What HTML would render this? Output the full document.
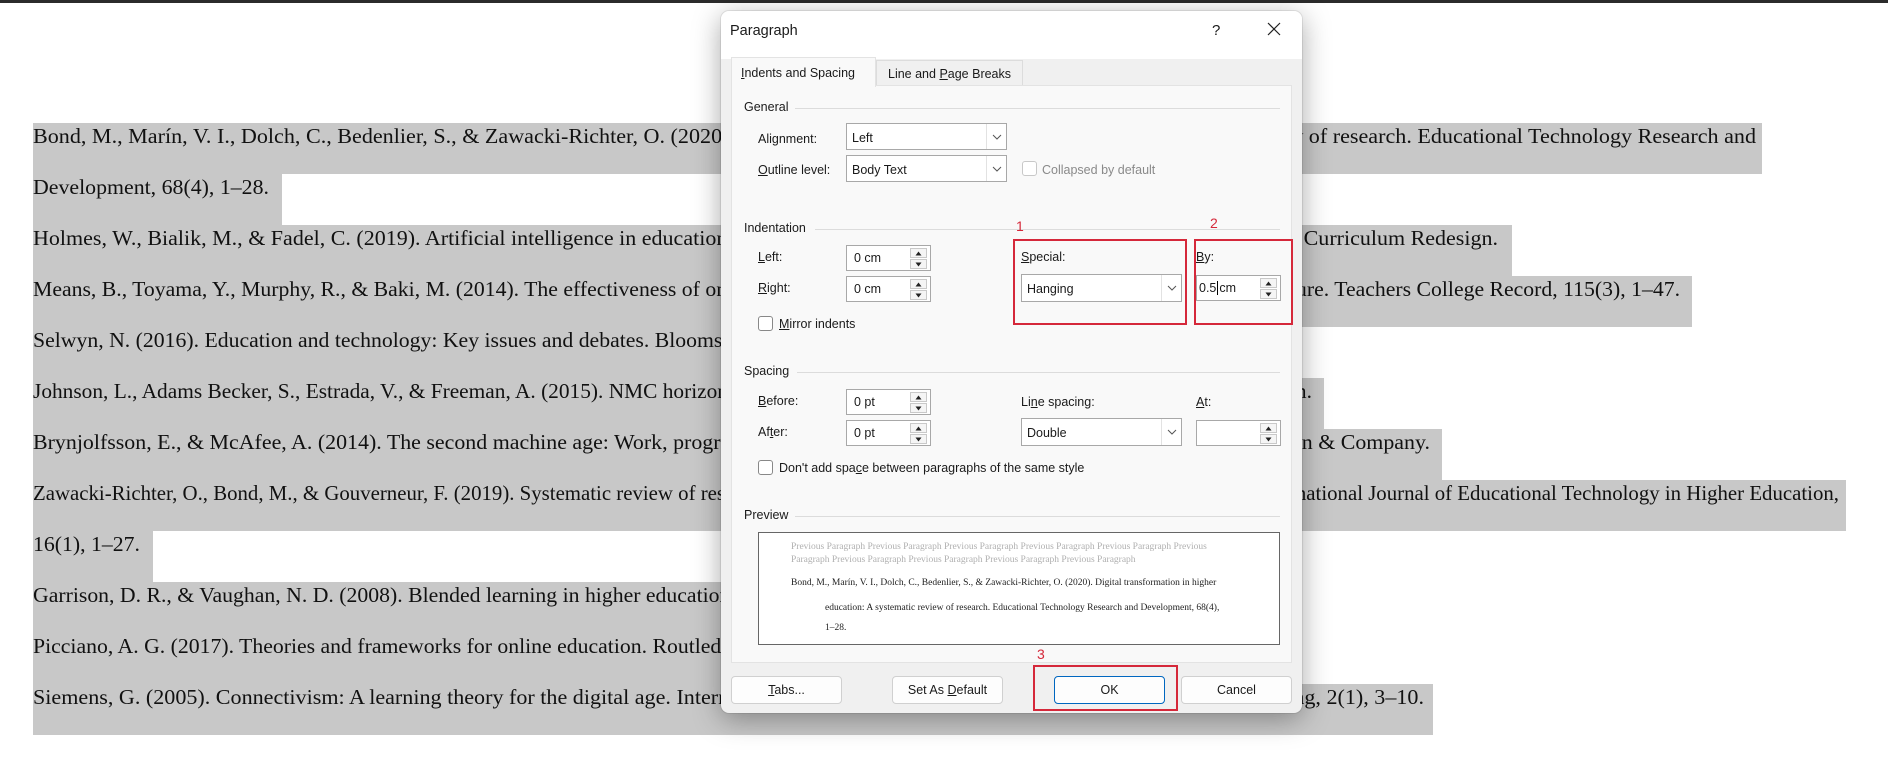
<!DOCTYPE html>
<html><head><meta charset="utf-8">
<style>
*{box-sizing:border-box;margin:0;padding:0}
body{width:1888px;height:760px;background:#fff;position:relative;overflow:hidden;font-family:"Liberation Sans",sans-serif}
.topbar{position:absolute;left:0;top:0;width:1888px;height:3px;background:#2b2b2b}
.row{position:absolute;left:33px;height:51px;background:#c8c8c8;overflow:hidden}
.row span{position:absolute;left:0;top:0;white-space:nowrap;font-family:"Liberation Serif",serif;font-size:21px;line-height:26px;color:#111;transform-origin:0 0}
.row span.n{transform:scaleX(1.035)}
.dlg{position:absolute;left:721px;top:11px;width:581px;height:702px;background:#f0f0f0;border-radius:8px;box-shadow:0 6px 28px rgba(0,0,0,.35),0 0 0 1px rgba(0,0,0,.08);overflow:hidden}
.abs{position:absolute}
.t{font-size:12.5px;color:#1a1a1a;white-space:nowrap}
.titlebar{left:0;top:0;width:581px;height:48px;background:#fff}
.panel{left:10px;top:74px;width:561px;height:578px;background:#f9f9f9;border:1px solid #e3e3e3}
.tabA{left:10px;top:46px;width:145px;height:30px;background:#f9f9f9;border:1px solid #e3e3e3;border-bottom:none}
.tabB{left:155px;top:49px;width:147px;height:25px;background:#f0f0f0;border:1px solid #dcdcdc;border-bottom:none}
.hr{height:1px;background:#dcdcdc}
.inp{background:#fff;border:1px solid #a8a8a8}
.dd .chev{position:absolute;right:0;top:0;width:20px;height:100%;border-left:1px solid #e2e2e2}
.spin{position:absolute;right:1px;top:1px;width:19px;bottom:1px}
.spin div{position:absolute;left:0;width:17px;height:10px;border:1px solid #c9c9c9;background:#f5f5f5}
.cb{width:15px;height:15px;border:1px solid #888;border-radius:3px;background:#fff}
.red{border:2px solid #d5283a}
.rn{color:#d5283a;font-size:14px}
.btn{top:665px;height:28px;width:111px;background:#fdfdfd;border:1px solid #d0d0d0;border-radius:4px;text-align:center;line-height:26px;font-size:12.5px;color:#1a1a1a}
u{text-decoration:underline}
.pv{font-family:"Liberation Serif",serif;font-size:9.5px;white-space:nowrap}
</style></head><body>
<div class="topbar"></div>

<div class="row" style="top:123px;width:1729px"><span data-w="1723">Bond, M., Marín, V. I., Dolch, C., Bedenlier, S., &amp; Zawacki-Richter, O. (2020). Digital transformation in higher education: A systematic review of research. Educational Technology Research and</span></div>
<div class="row" style="top:174px;width:249px"><span data-w="236">Development, 68(4), 1–28.</span></div>
<div class="row" style="top:225px;width:1479px"><span data-w="1465">Holmes, W., Bialik, M., &amp; Fadel, C. (2019). Artificial intelligence in education: Promises and implications for teaching and learning. Center for Curriculum Redesign.</span></div>
<div class="row" style="top:276px;width:1659px"><span data-w="1647">Means, B., Toyama, Y., Murphy, R., &amp; Baki, M. (2014). The effectiveness of online and blended learning: A meta-analysis of the empirical literature. Teachers College Record, 115(3), 1–47.</span></div>
<div class="row" style="top:327px;width:1100px"><span class="n">Selwyn, N. (2016). Education and technology: Key issues and debates. Bloomsbury Publishing.</span></div>
<div class="row" style="top:378px;width:1291px"><span data-w="1279">Johnson, L., Adams Becker, S., Estrada, V., &amp; Freeman, A. (2015). NMC horizon report: 2015 higher education edition. The New Media Consortium.</span></div>
<div class="row" style="top:429px;width:1409px"><span data-w="1397">Brynjolfsson, E., &amp; McAfee, A. (2014). The second machine age: Work, progress, and prosperity in a time of brilliant technologies. W. W. Norton &amp; Company.</span></div>
<div class="row" style="top:480px;width:1813px"><span data-w="1806">Zawacki-Richter, O., Bond, M., &amp; Gouverneur, F. (2019). Systematic review of research on artificial intelligence applications in higher education. International Journal of Educational Technology in Higher Education,</span></div>
<div class="row" style="top:531px;width:120px"><span data-w="107">16(1), 1–27.</span></div>
<div class="row" style="top:582px;width:1100px"><span class="n">Garrison, D. R., &amp; Vaughan, N. D. (2008). Blended learning in higher education: Framework, principles, and guidelines.</span></div>
<div class="row" style="top:633px;width:1000px"><span class="n">Picciano, A. G. (2017). Theories and frameworks for online education. Routledge.</span></div>
<div class="row" style="top:684px;width:1400px"><span data-w="1391">Siemens, G. (2005). Connectivism: A learning theory for the digital age. International Journal of Instructional Technology and Distance Learning, 2(1), 3–10.</span></div>

<div class="dlg">
 <div class="abs titlebar"></div>
 <div class="abs t" style="left:9px;top:12px;font-size:14.5px">Paragraph</div>
 <div class="abs t" style="left:491px;top:11px;font-size:15px">?</div>
 <svg class="abs" style="left:546px;top:11px" width="14" height="14"><path d="M1 1L13 13M13 1L1 13" stroke="#222" stroke-width="1.2"/></svg>

 <div class="abs panel"></div>
 <div class="abs tabB"></div>
 <div class="abs tabA"></div>
 <div class="abs t" style="left:20px;top:55px"><u>I</u>ndents and Spacing</div>
 <div class="abs t" style="left:167px;top:56px">Line and <u>P</u>age Breaks</div>

 <div class="abs t" style="left:23px;top:89px">General</div>
 <div class="abs hr" style="left:74px;top:97px;width:485px"></div>
 <div class="abs t" style="left:37px;top:121px">Ali<u>g</u>nment:</div>
 <div class="abs inp dd" style="left:125px;top:112px;width:161px;height:27px"><div class="chev"></div></div>
 <div class="abs t" style="left:131px;top:120px">Left</div>
 <div class="abs t" style="left:37px;top:152px"><u>O</u>utline level:</div>
 <div class="abs inp dd" style="left:125px;top:144px;width:161px;height:27px"><div class="chev"></div></div>
 <div class="abs t" style="left:131px;top:152px">Body Text</div>
 <div class="abs cb" style="left:301px;top:150px;border-color:#c8c8c8"></div>
 <div class="abs t" style="left:321px;top:152px;color:#8a8a8a">Collapsed by default</div>

 <div class="abs t" style="left:23px;top:210px">Indentation</div>
 <div class="abs hr" style="left:94px;top:218px;width:465px"></div>
 <div class="abs rn" style="left:295px;top:207px">1</div>
 <div class="abs rn" style="left:489px;top:204px">2</div>
 <div class="abs t" style="left:37px;top:239px"><u>L</u>eft:</div>
 <div class="abs inp" style="left:125px;top:234px;width:85px;height:26px"><div class="spin"></div></div>
 <div class="abs t" style="left:133px;top:240px">0 cm</div>
 <div class="abs t" style="left:37px;top:270px"><u>R</u>ight:</div>
 <div class="abs inp" style="left:125px;top:265px;width:85px;height:26px"><div class="spin"></div></div>
 <div class="abs t" style="left:133px;top:271px">0 cm</div>
 <div class="abs red" style="left:292px;top:228px;width:174px;height:86px"></div>
 <div class="abs red" style="left:473px;top:228px;width:99px;height:86px"></div>
 <div class="abs t" style="left:300px;top:239px"><u>S</u>pecial:</div>
 <div class="abs inp dd" style="left:300px;top:263px;width:161px;height:28px"><div class="chev"></div></div>
 <div class="abs t" style="left:306px;top:271px">Hanging</div>
 <div class="abs t" style="left:475px;top:239px"><u>B</u>y:</div>
 <div class="abs inp" style="left:475px;top:264px;width:85px;height:26px"><div class="spin"></div></div>
 <div class="abs t" style="left:478px;top:270px">0.5<span style="border-left:1px solid #000;margin:0 1px"></span>cm</div>
 <div class="abs cb" style="left:37px;top:305px"></div>
 <div class="abs t" style="left:58px;top:306px"><u>M</u>irror indents</div>

 <div class="abs t" style="left:23px;top:353px">Spacing</div>
 <div class="abs hr" style="left:76px;top:361px;width:483px"></div>
 <div class="abs t" style="left:37px;top:383px"><u>B</u>efore:</div>
 <div class="abs inp" style="left:125px;top:378px;width:85px;height:26px"><div class="spin"></div></div>
 <div class="abs t" style="left:133px;top:384px">0 pt</div>
 <div class="abs t" style="left:37px;top:414px">Af<u>t</u>er:</div>
 <div class="abs inp" style="left:125px;top:409px;width:85px;height:26px"><div class="spin"></div></div>
 <div class="abs t" style="left:133px;top:415px">0 pt</div>
 <div class="abs t" style="left:300px;top:384px">Li<u>n</u>e spacing:</div>
 <div class="abs inp dd" style="left:300px;top:407px;width:161px;height:28px"><div class="chev"></div></div>
 <div class="abs t" style="left:306px;top:415px">Double</div>
 <div class="abs t" style="left:475px;top:384px"><u>A</u>t:</div>
 <div class="abs inp" style="left:475px;top:409px;width:85px;height:26px"><div class="spin"></div></div>
 <div class="abs cb" style="left:37px;top:449px"></div>
 <div class="abs t" style="left:58px;top:450px">Don't add spa<u>c</u>e between paragraphs of the same style</div>

 <div class="abs t" style="left:23px;top:497px">Preview</div>
 <div class="abs hr" style="left:74px;top:505px;width:485px"></div>
 <div class="abs" style="left:37px;top:521px;width:522px;height:113px;background:#fff;border:1px solid #666"></div>
 <div class="abs pv" style="left:70px;top:531px;color:#b0b0b0">Previous Paragraph Previous Paragraph Previous Paragraph Previous Paragraph Previous Paragraph Previous</div>
 <div class="abs pv" style="left:70px;top:544px;color:#b0b0b0">Paragraph Previous Paragraph Previous Paragraph Previous Paragraph Previous Paragraph</div>
 <div class="abs pv" style="left:70px;top:567px;color:#222">Bond, M., Marín, V. I., Dolch, C., Bedenlier, S., &amp; Zawacki-Richter, O. (2020). Digital transformation in higher</div>
 <div class="abs pv" style="left:104px;top:592px;color:#222">education: A systematic review of research. Educational Technology Research and Development, 68(4),</div>
 <div class="abs pv" style="left:104px;top:612px;color:#222">1–28.</div>

 <div class="abs" style="left:10px;top:651px;width:561px;height:1px;background:#e3e3e3"></div>
 <div class="abs rn" style="left:316px;top:635px">3</div>
 <div class="abs red" style="left:312px;top:654px;width:145px;height:46px"></div>
 <div class="abs btn" style="left:10px"><u>T</u>abs...</div>
 <div class="abs btn" style="left:171px">Set As <u>D</u>efault</div>
 <div class="abs btn" style="left:333px;border-color:#0067c0">OK</div>
 <div class="abs btn" style="left:460px">Cancel</div>
</div>

<script>
document.querySelectorAll('.row span').forEach(function(s){
 var d=s.getAttribute('data-w');if(!d)return;
 var w=parseFloat(d);var a=s.getBoundingClientRect().width;
 if(a>0)s.style.transform='scaleX('+(w/a)+')';
});
document.querySelectorAll('.dd .chev').forEach(function(c){
 c.innerHTML='<svg width="20" height="24" style="position:absolute;left:0;top:50%;margin-top:-12px"><path d="M6 10l4 4 4-4" fill="none" stroke="#555" stroke-width="1"/></svg>';
});
document.querySelectorAll('.spin').forEach(function(c){
 c.innerHTML='<div style="top:1px"></div><div style="top:12px"></div><svg width="19" height="24" style="position:absolute;left:0;top:0"><path d="M5.5 8.5h6l-3-4z M5.5 15.5h6l-3 4z" fill="#222"/></svg>';
});
</script>
</body></html>
